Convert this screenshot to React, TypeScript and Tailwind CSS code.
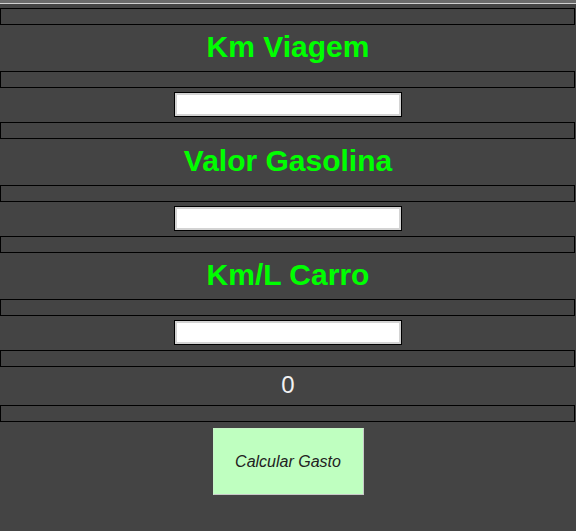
import React, { useState } from "react";

function Spacer() {
  return <div className="h-[17px] w-[575px] border border-black" />;
}

function Heading({ children }: { children: React.ReactNode }) {
  return (
    <h1 className="h-[46px] pt-[5px] text-center text-[30px] leading-[34px] font-bold text-[#00ff00]">
      {children}
    </h1>
  );
}

function Field({ value, onChange }: { value: string; onChange: (v: string) => void }) {
  return (
    <div className="flex h-[34px] justify-center pt-[4px]">
      <input
        type="text"
        value={value}
        onChange={(e) => onChange(e.target.value)}
        className="h-[25px] w-[228px] border border-black bg-white px-1 text-[13px] text-black shadow-[inset_0_0_0_2px_#d3d3d3] outline-none"
      />
    </div>
  );
}

export default function App() {
  const [km, setKm] = useState("");
  const [preco, setPreco] = useState("");
  const [kml, setKml] = useState("");
  const [total, setTotal] = useState<string>("0");

  const calcular = () => {
    const k = parseFloat(km.replace(",", "."));
    const p = parseFloat(preco.replace(",", "."));
    const c = parseFloat(kml.replace(",", "."));
    if (!k || !p || !c) {
      setTotal("0");
      return;
    }
    setTotal(((k / c) * p).toFixed(2));
  };

  return (
    <div className="min-h-screen bg-[#444444] font-['Liberation_Sans',Arial,sans-serif]">
      <div className="h-[3px] bg-[#6b6b6b]" />
      <div className="h-[1px] bg-[#d0d0d0]" />
      <div className="pt-[4px]">
        <Spacer />
        <Heading>Km Viagem</Heading>
        <Spacer />
        <Field value={km} onChange={setKm} />
        <Spacer />
        <Heading>Valor Gasolina</Heading>
        <Spacer />
        <Field value={preco} onChange={setPreco} />
        <Spacer />
        <Heading>Km/L Carro</Heading>
        <Spacer />
        <Field value={kml} onChange={setKml} />
        <Spacer />
        <div className="h-[38px] pt-[4px] text-center text-[24px] leading-[28px] text-[#f2f2f2]">{total}</div>
        <Spacer />
        <div className="flex justify-center pt-[6px]">
          <button
            type="button"
            onClick={calcular}
            className="h-[67px] w-[151px] border border-b-[#c8c8c8] border-l-[#c8f5c8] border-r-[#c8c8c8] border-t-[#c8f5c8] bg-[#bfffc0] text-[16px] italic text-[#222]"
          >
            Calcular Gasto
          </button>
        </div>
      </div>
    </div>
  );
}
